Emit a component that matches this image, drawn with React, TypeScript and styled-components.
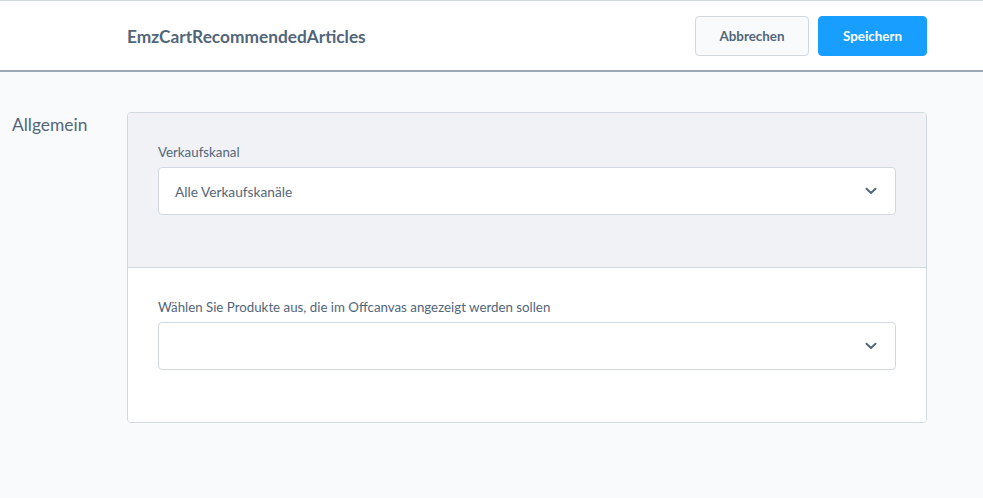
import React from "react";
import styled, { createGlobalStyle } from "styled-components";

const Global = createGlobalStyle`
  html, body { margin: 0; padding: 0; background: #f9fafb; }
  body { font-family: "Source Sans Pro", "Lato", "Noto Sans", sans-serif; color: #52667a; }
  * { box-sizing: border-box; }
`;

const Page = styled.div`
  width: 983px;
  height: 498px;
  background: #f9fafb;
  border-top: 1px solid #d1d9e0;
  display: flex;
  flex-direction: column;
`;

const Header = styled.header`
  height: 71px;
  background: #fff;
  border-bottom: 2px solid #9aa8b5;
  display: flex;
  align-items: center;
  padding: 0 56px 0 127px;
  gap: 9px;
`;

const Title = styled.h1`
  margin: 0;
  flex: 1;
  font-size: 17.3px;
  font-weight: 700;
  color: #52667a;
  padding-top: 1px;
`;

const Button = styled.button<{ $primary?: boolean }>`
  height: 40px;
  padding: 0;
  border-radius: 4px;
  font-family: inherit;
  font-size: 13.4px;
  font-weight: 700;
  border: 1px solid ${(p) => (p.$primary ? "#189eff" : "#d1d9e0")};
  background: ${(p) => (p.$primary ? "#189eff" : "#f9fafb")};
  color: ${(p) => (p.$primary ? "#fff" : "#52667a")};
  width: ${(p) => (p.$primary ? "109px" : "114px")};
`;

const Body = styled.main`
  display: flex;
  padding-top: 40px;
`;

const SideLabel = styled.div`
  width: 127px;
  padding-left: 12px;
  padding-top: 2px;
  font-size: 17.4px;
  color: #52667a;
`;

const Card = styled.section`
  width: 800px;
  border: 1px solid #d1d9e0;
  border-radius: 4px;
  background: #fff;
  overflow: hidden;
`;

const CardSection = styled.div<{ $gray?: boolean }>`
  background: ${(p) => (p.$gray ? "#f0f2f5" : "#fff")};
  border-bottom: ${(p) => (p.$gray ? "1px solid #d1d9e0" : "none")};
  padding: 30px 30px 52px;
`;

const Field = styled.div`
  display: flex;
  flex-direction: column;
  gap: 6px;
`;

const Label = styled.label`
  font-size: 13.3px;
  color: #52667a;
  line-height: 18px;
`;

const Select = styled.div`
  height: 48px;
  border: 1px solid #d1d9e0;
  border-radius: 4px;
  background: #fff;
  display: flex;
  align-items: center;
  justify-content: space-between;
  padding: 0 18px 0 16px;
  font-size: 13.7px;
  color: #52667a;
`;

const Chevron = () => (
  <svg width="12" height="8" viewBox="0 0 12 8" fill="none">
    <path d="M1.5 1.8 L6 6 L10.5 1.8" stroke="#52667a" strokeWidth="2" strokeLinecap="round" strokeLinejoin="round" />
  </svg>
);

export default function App() {
  return (
    <>
      <Global />
      <Page>
        <Header>
          <Title>EmzCartRecommendedArticles</Title>
          <Button>Abbrechen</Button>
          <Button $primary>Speichern</Button>
        </Header>
        <Body>
          <SideLabel>Allgemein</SideLabel>
          <Card>
            <CardSection $gray>
              <Field>
                <Label>Verkaufskanal</Label>
                <Select>
                  <span>Alle Verkaufskanäle</span>
                  <Chevron />
                </Select>
              </Field>
            </CardSection>
            <CardSection>
              <Field>
                <Label>Wählen Sie Produkte aus, die im Offcanvas angezeigt werden sollen</Label>
                <Select>
                  <span></span>
                  <Chevron />
                </Select>
              </Field>
            </CardSection>
          </Card>
        </Body>
      </Page>
    </>
  );
}
